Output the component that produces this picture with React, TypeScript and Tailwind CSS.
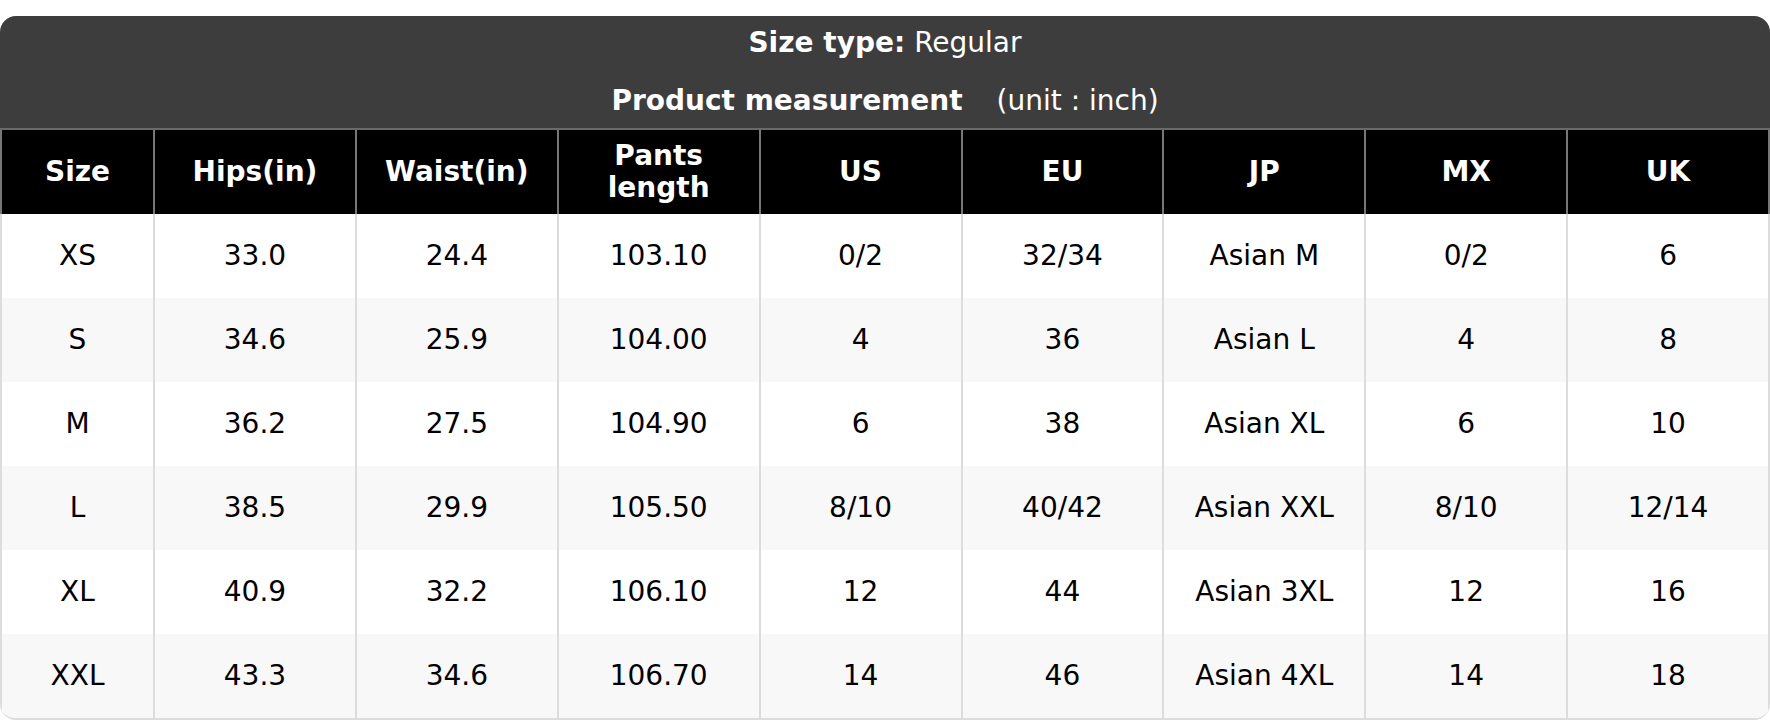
import React from 'react';

const headers = ['Size', 'Hips(in)', 'Waist(in)', 'Pants length', 'US', 'EU', 'JP', 'MX', 'UK'];

const rows: string[][] = [
  ['XS', '33.0', '24.4', '103.10', '0/2', '32/34', 'Asian M', '0/2', '6'],
  ['S', '34.6', '25.9', '104.00', '4', '36', 'Asian L', '4', '8'],
  ['M', '36.2', '27.5', '104.90', '6', '38', 'Asian XL', '6', '10'],
  ['L', '38.5', '29.9', '105.50', '8/10', '40/42', 'Asian XXL', '8/10', '12/14'],
  ['XL', '40.9', '32.2', '106.10', '12', '44', 'Asian 3XL', '12', '16'],
  ['XXL', '43.3', '34.6', '106.70', '14', '46', 'Asian 4XL', '14', '18'],
];

export default function App() {
  return (
    <div className="bg-white pt-4 font-['DejaVu_Sans',sans-serif] text-[28px]">
      <div className="rounded-2xl overflow-hidden border-b-2 border-[#dcdcdc]">
        {/* Title block */}
        <div className="bg-[#3d3d3d] text-white border-b-2 border-[#6a6a6a]">
          <div className="h-[54px] flex items-center justify-center">
            <span className="font-bold">Size type:</span>
            <span className="ml-[9px]">Regular</span>
          </div>
          <div className="h-[58px] pt-[3px] flex items-center justify-center">
            <span className="font-bold">Product measurement</span>
            <span className="ml-[34px]">(unit : inch)</span>
          </div>
        </div>

        <table className="w-full table-fixed border-collapse">
          <colgroup>
            <col className="w-[153px]" />
            {headers.slice(1).map((h) => (
              <col key={h} />
            ))}
          </colgroup>
          <thead>
            <tr>
              {headers.map((h) => (
                <th
                  key={h}
                  className="h-[84px] bg-black text-white font-bold leading-[32px] border-x-2 border-[#777] px-2"
                >
                  {h === 'Pants length' ? (
                    <>
                      Pants
                      <br />
                      length
                    </>
                  ) : (
                    h
                  )}
                </th>
              ))}
            </tr>
          </thead>
          <tbody>
            {rows.map((r, i) => (
              <tr key={r[0]} className={i % 2 === 0 ? 'bg-white' : 'bg-[#f8f8f8]'}>
                {r.map((c, j) => (
                  <td
                    key={j}
                    className="h-[84px] text-center text-black border-x-2 border-[#dcdcdc]"
                  >
                    {c}
                  </td>
                ))}
              </tr>
            ))}
          </tbody>
        </table>
      </div>
    </div>
  );
}
